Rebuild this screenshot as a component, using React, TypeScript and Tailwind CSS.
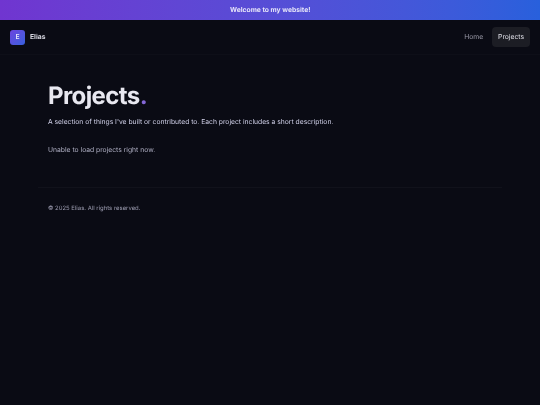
export default function App() {
  return (
    <div className="min-h-[405px] bg-[#0a0b14] font-['Inter',sans-serif] text-white antialiased [text-rendering:geometricPrecision]">
      {/* Banner */}
      <div className="flex h-5 items-center justify-center bg-gradient-to-r from-[#7035d0] to-[#2860dc] text-[6.75px] font-bold text-white/85">
        <span className="will-change-transform">Welcome to my website!</span>
      </div>

      {/* Nav */}
      <header className="flex h-[35px] items-center justify-between border-b border-white/[0.02] px-2.5 will-change-transform">
        <div className="flex items-center gap-[5px]">
          <div className="flex h-[15px] w-[15px] items-center justify-center rounded-[3px] bg-gradient-to-br from-[#6a44e0] to-[#3460dc] text-[6.75px] font-semibold text-white/85">
            E
          </div>
          <span className="text-[6.75px] font-bold text-[#d8d8e2]">Elias</span>
        </div>
        <nav className="flex items-center gap-[3px] text-[6.75px]">
          <a className="px-[6px] py-[5px] text-[#9a9aa8]">Home</a>
          <a className="rounded-[4px] bg-[#1c1d24] px-[6px] py-[5px] text-[#e2e2ea]">Projects</a>
        </nav>
      </header>

      {/* Main */}
      <main className="px-12 pt-[26px] will-change-transform">
        <h1 className="text-[24px] leading-[30px] font-bold tracking-[-0.025em] text-[#e8e8f0]">
          Projects<span className="text-[#8467d6]">.</span>
        </h1>
        <p className="mt-[5px] text-[6.75px] leading-3 text-[#d0d0e8]">
          A selection of things I've built or contributed to. Each project includes a short description.
        </p>
        <p className="mt-4 text-[6.75px] leading-3 text-[#b0b0c4]">Unable to load projects right now.</p>
      </main>

      {/* Footer */}
      <footer className="mx-[38px] mt-[31px] border-t border-white/[0.03] px-[10px] pt-[15px] will-change-transform">
        <p className="text-[5.95px] leading-3 text-[#9c9cb0]">© 2025 Elias. All rights reserved.</p>
      </footer>
    </div>
  )
}
